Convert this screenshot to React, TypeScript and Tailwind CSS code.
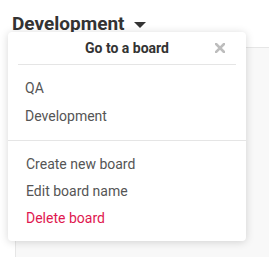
import React from "react";

const boards = ["QA", "Development"];

export default function App() {
    return (
        <div className="relative w-[269px] h-[257px] overflow-hidden bg-white font-['Roboto',sans-serif]">
            <div className="flex items-center gap-[9px] pl-[12px] pt-[7px] h-[40px]">
                <span className="text-[19px] leading-[22px] font-bold text-[#333]">Development</span>
                <svg width="12" height="6" viewBox="0 0 12 6" className="mt-[2px]">
                    <path d="M0 0 L12 0 L6 6 Z" fill="#333" />
                </svg>
            </div>
            <div className="ml-[15px] mt-[7px] h-[300px] border-l border-t border-[#e6e6e6] bg-[#f8f8f8]" />

            <div className="absolute left-[8px] top-[32px] w-[238px] rounded-[4px] bg-white shadow-[0_1px_8px_rgba(0,0,0,0.16)]">
                <div className="relative mx-[10px] flex h-[33px] items-center justify-center border-b border-[#e5e5e5]">
                    <span className="text-[14px] font-bold text-[#333]">Go to a board</span>
                    <svg width="10" height="10" viewBox="0 0 10 10" className="absolute right-[11px] top-[11px]">
                        <path d="M1 1 L9 9 M9 1 L1 9" stroke="#bdbdbd" strokeWidth="2.6" strokeLinecap="square" />
                    </svg>
                </div>
                <div className="flex flex-col pt-[9px] pb-[10px]">
                    {boards.map((b) => (
                        <div key={b} className="px-[17px] text-[14px] leading-[28px] text-[#555]">{b}</div>
                    ))}
                </div>
                <div className="border-t border-[#e5e5e5]" />
                <div className="flex flex-col pt-[10px] pb-[9px]">
                    <div className="px-[18px] text-[14px] leading-[27px] text-[#555]">Create new board</div>
                    <div className="px-[18px] text-[14px] leading-[27px] text-[#555]">Edit board name</div>
                    <div className="px-[18px] text-[14px] leading-[27px] text-[#e0174f]">Delete board</div>
                </div>
            </div>
        </div>
    );
}
